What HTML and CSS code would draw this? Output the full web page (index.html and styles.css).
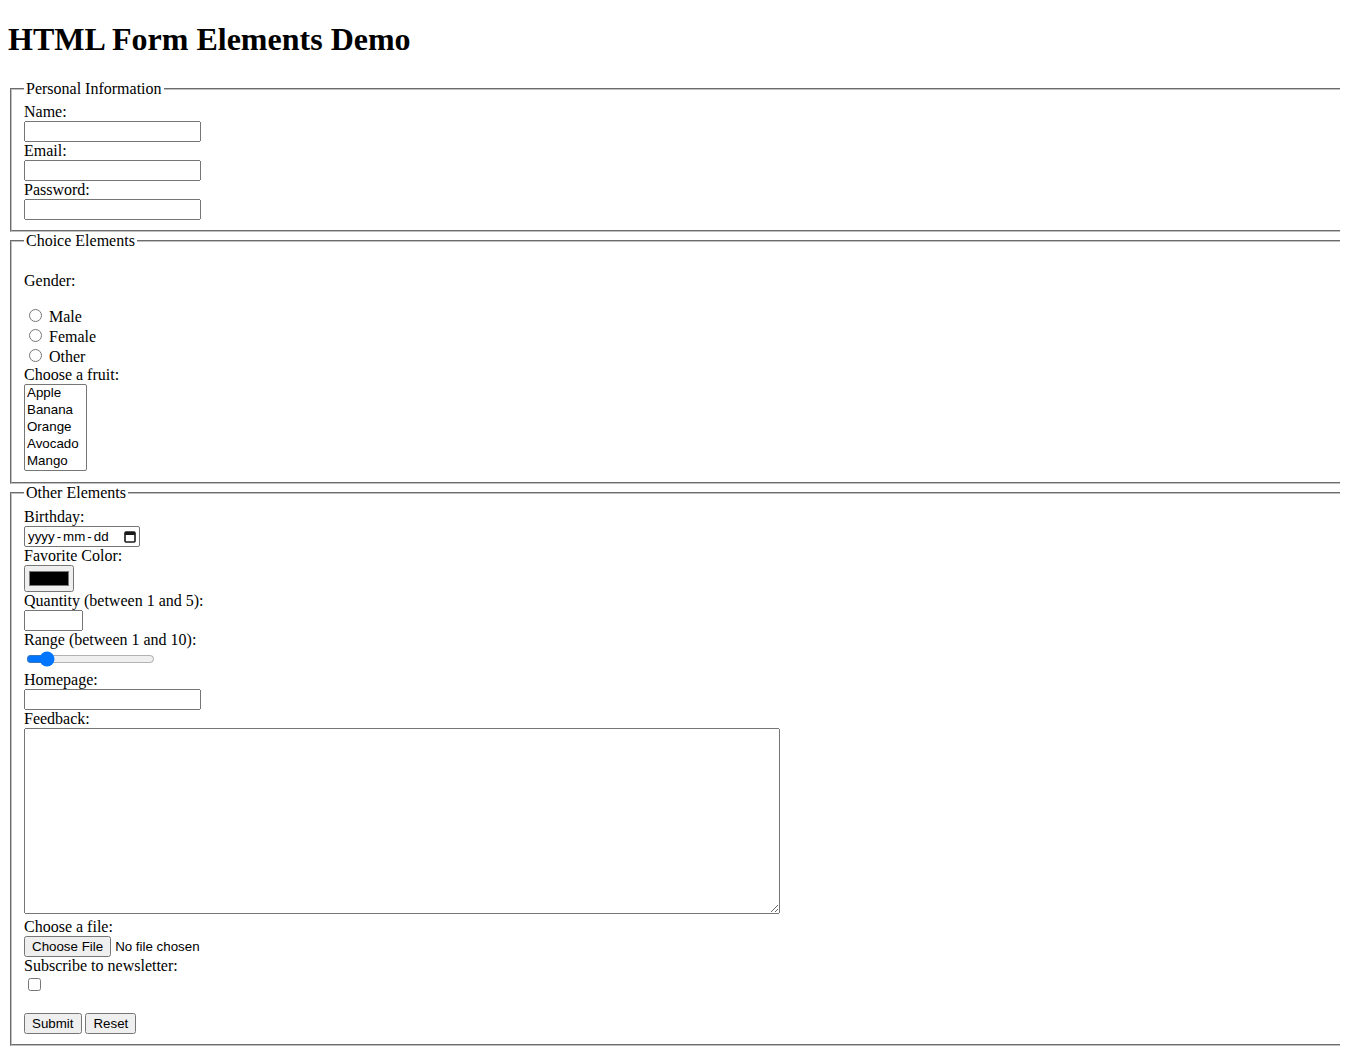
FILE: index.html
```html
<!DOCTYPE html>
<html lang="en">
<head>
<meta charset="utf-8">
<title>HTML Form Elements Demo</title>
<link rel="stylesheet" href="styles.css">
</head>
<body>
<h1>HTML Form Elements Demo</h1>
<form>
<fieldset class="group">
<legend>Personal Information</legend>
<label for="name">Name:</label><br>
<input class="text-field" type="text" id="name" name="name"><br>
<label for="email">Email:</label><br>
<input class="text-field" type="email" id="email" name="email"><br>
<label for="password">Password:</label><br>
<input class="text-field" type="password" id="password" name="password">
</fieldset>
<fieldset class="group">
<legend>Choice Elements</legend>
<p>Gender:</p>
<input class="radio" type="radio" id="male" name="gender" value="male"> <label for="male">Male</label><br>
<input class="radio" type="radio" id="female" name="gender" value="female"> <label for="female">Female</label><br>
<input class="radio" type="radio" id="other" name="gender" value="other"> <label for="other">Other</label><br>
<label for="fruit">Choose a fruit:</label><br>
<select class="fruit-list" id="fruit" name="fruit" size="5">
<option>Apple</option>
<option>Banana</option>
<option>Orange</option>
<option>Avocado</option>
<option>Mango</option>
</select>
</fieldset>
<fieldset class="group">
<legend>Other Elements</legend>
<label for="birthday">Birthday:</label><br>
<span class="date-field" id="birthday" role="textbox" aria-label="Birthday"><span class="date-part">yyyy</span><span class="date-sep">-</span><span class="date-part">mm</span><span class="date-sep">-</span><span class="date-part">dd</span><svg class="cal-icon" width="12" height="13" viewBox="0 0 12 13" aria-hidden="true"><rect x="1" y="2" width="10" height="10" rx="1" fill="none" stroke="#1a1a1a" stroke-width="1.6"/><rect x="1" y="2" width="10" height="3" fill="#1a1a1a"/></svg></span><br>
<label for="color">Favorite Color:</label><br>
<input class="color-field" type="color" id="color" name="color"><br>
<label for="quantity">Quantity (between 1 and 5):</label><br>
<input class="number-field" type="number" id="quantity" name="quantity" min="1" max="5"><br>
<label for="range">Range (between 1 and 10):</label><br>
<input class="range-field" type="range" id="range" name="range" min="1" max="10" value="2"><br>
<label for="homepage">Homepage:</label><br>
<input class="text-field" type="url" id="homepage" name="homepage"><br>
<label for="feedback">Feedback:</label><br>
<textarea class="feedback" id="feedback" name="feedback"></textarea><br>
<label for="file">Choose a file:</label><br>
<input class="file-field" type="file" id="file" name="file"><br>
<label for="subscribe">Subscribe to newsletter:</label><br>
<input class="checkbox" type="checkbox" id="subscribe" name="subscribe"><br><br>
<input class="btn btn-submit" type="submit" value="Submit">
<input class="btn" type="reset" value="Reset">
</fieldset>
</form>
</body>
</html>
```
FILE: styles.css
```css
html {
  background: #ffffff;
  overflow: hidden;
}
body {
  margin: 8px;
  font-family: "Liberation Serif", "Times New Roman", serif;
  font-size: 16px;
  color: #000;
}
h1 {
  font-size: 2em;
  margin: 13.44px 0 21.44px;
}
.group {
  box-sizing: border-box;
  width: calc(100% + 40px);
  margin: 0 2px;
  padding: 0.35em 0.75em 0.625em;
  border: 2px groove #c0c0c0;
}
input, select, textarea, button {
  font-family: "Liberation Sans", Arial, sans-serif;
  font-size: 13.3333px;
}
.text-field {
  box-sizing: border-box;
  width: 177px;
  height: 21px;
}
.fruit-list {
  width: 63px;
}
.date-field {
  box-sizing: border-box;
  display: inline-flex;
  align-items: center;
  width: 116px;
  height: 21px;
  padding: 0 3px 0 3px;
  border: 1px solid #767676;
  border-radius: 2px;
  font-family: "Liberation Sans", Arial, sans-serif;
  font-size: 13.3333px;
  color: #000;
  vertical-align: bottom;
  cursor: text;
}
.date-part {
  line-height: 15px;
}
.date-sep {
  margin: 0 2px;
  line-height: 15px;
}
.cal-icon {
  margin-left: auto;
  flex: none;
}
.number-field {
  box-sizing: border-box;
  width: 59px;
  height: 21px;
}
.feedback {
  box-sizing: border-box;
  width: 756px;
  height: 186px;
}
.btn-submit {
  padding-right: 7px;
  margin-right: -1px;
}
```
